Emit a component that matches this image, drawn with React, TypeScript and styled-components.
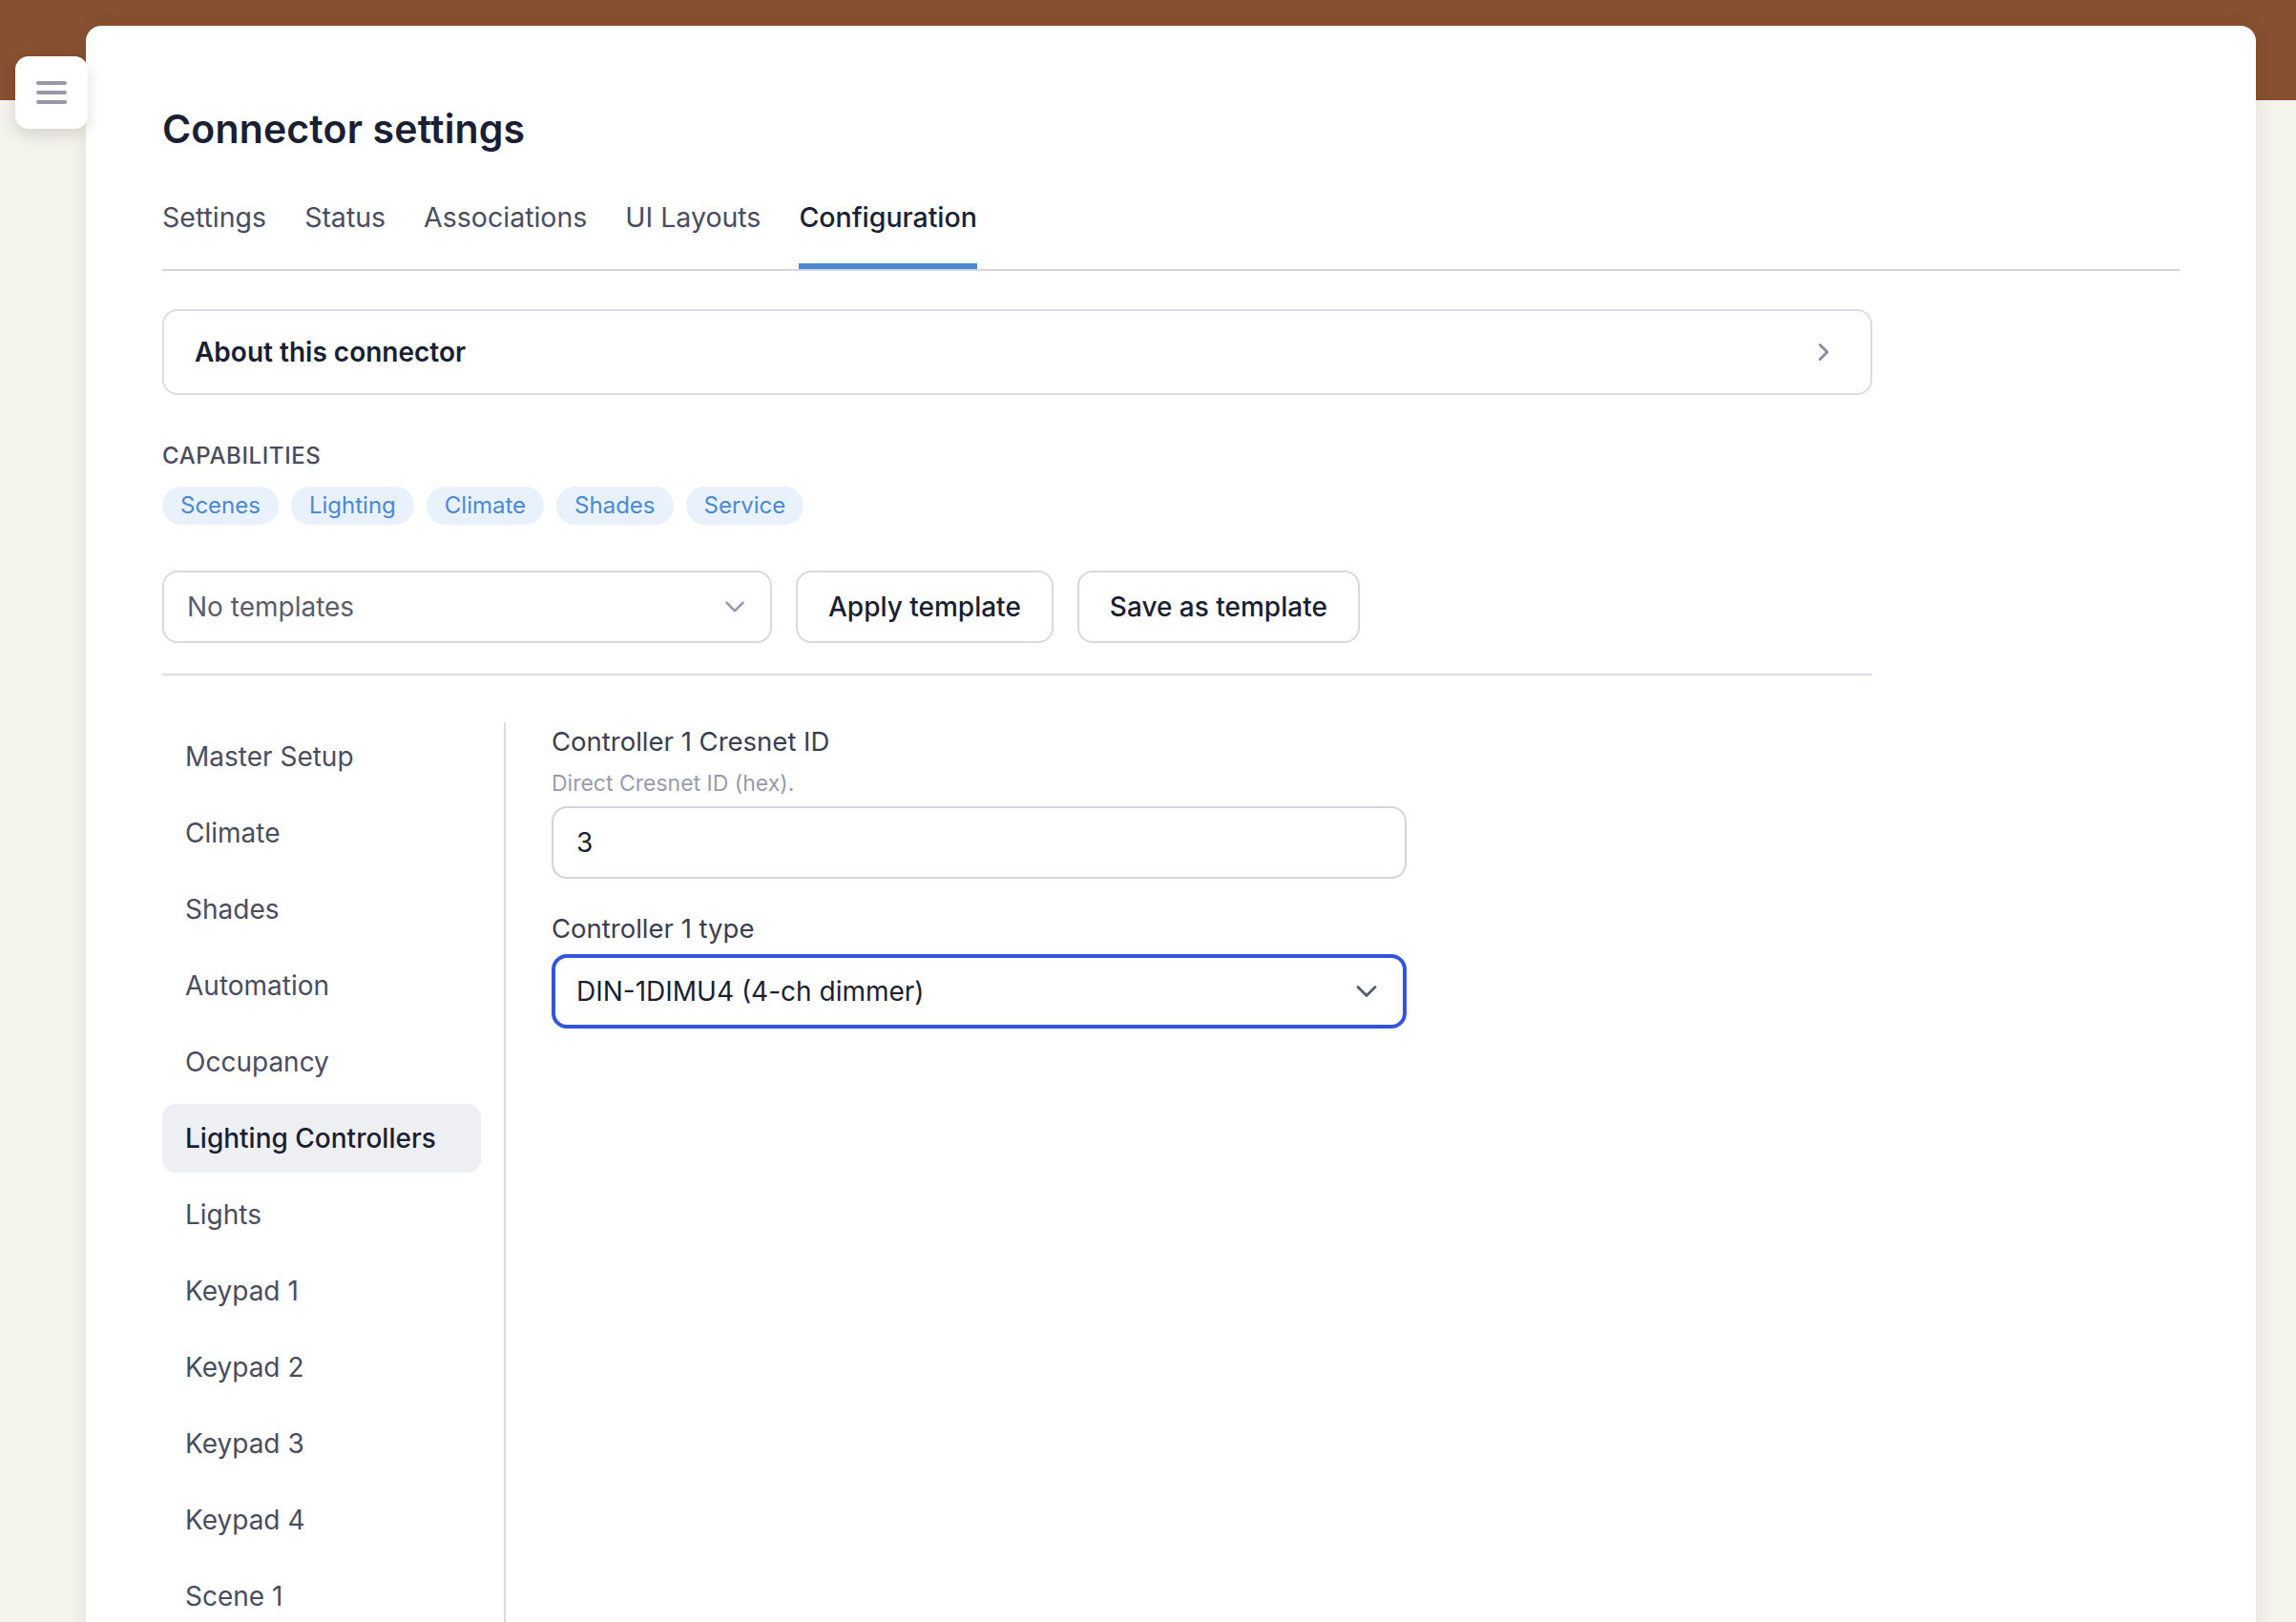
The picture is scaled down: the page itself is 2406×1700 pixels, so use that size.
import React from "react";
import styled, { createGlobalStyle } from "styled-components";
import { ChevronDown, ChevronRight } from "lucide-react";

const GlobalStyle = createGlobalStyle`
  html, body {
    margin: 0;
    padding: 0;
    height: 100%;
    overflow: hidden;
  }
  body {
    font-family: Inter, "Noto Sans", "Liberation Sans", sans-serif;
    background: #f4f3ec;
    color: #1a1f33;
  }
  * { box-sizing: border-box; }
`;

const Page = styled.div`
  position: relative;
  height: 1700px;
  overflow: hidden;
  padding: 27px 42px 0 90px;
  background: linear-gradient(#875030 0, #875030 105px, #f4f3ec 105px);
`;

const MenuButton = styled.button`
  position: absolute;
  left: 16px;
  top: 59px;
  width: 76px;
  height: 76px;
  border: none;
  border-radius: 14px;
  background: #ffffff;
  box-shadow: 0 6px 16px rgba(40, 30, 20, 0.14);
  display: flex;
  flex-direction: column;
  align-items: center;
  justify-content: center;
  gap: 6px;
  padding: 0;
  z-index: 2;
`;

const MenuLine = styled.span`
  display: block;
  width: 32px;
  height: 4px;
  border-radius: 2px;
  background: #9898a8;
`;

const Card = styled.main`
  background: #ffffff;
  border-radius: 16px 16px 0 0;
  min-height: 1800px;
  padding: 80px 80px 0 80px;
  box-shadow: 0 2px 18px rgba(60, 50, 30, 0.1);
`;

const Title = styled.h1`
  margin: 0;
  font-size: 41px;
  line-height: 56px;
  font-weight: 600;
  color: #1a1f33;
  letter-spacing: 0.15px;
`;

const TabList = styled.nav`
  margin-top: 45px;
  display: flex;
  gap: 40px;
  border-bottom: 2px solid #d6d6e0;
`;

const Tab = styled.div<{ $active?: boolean }>`
  font-size: 28.5px;
  line-height: 40px;
  padding-bottom: 28px;
  border-bottom: 6px solid ${(p) => (p.$active ? "#4a88d4" : "transparent")};
  color: ${(p) => (p.$active ? "#1a1f33" : "#4a4d5e")};
  font-weight: ${(p) => (p.$active ? 500 : 400)};
`;

const Section = styled.div`
  max-width: 1792px;
`;

const AboutCard = styled.div`
  margin-top: 40px;
  border: 2px solid #dcdce4;
  border-radius: 16px;
  padding: 23px 32px 23px 32px;
  display: flex;
  align-items: center;
  justify-content: space-between;
  font-size: 28px;
  line-height: 40px;
  font-weight: 600;
  color: #1a1f33;
`;

const ChevronBox = styled.span`
  display: flex;
  color: #8a8ca0;
  margin-right: 2px;
`;

const CapLabel = styled.div`
  margin-top: 48px;
  font-size: 24px;
  line-height: 32px;
  font-weight: 500;
  letter-spacing: 0.6px;
  text-transform: uppercase;
  color: #4a4d5e;
`;

const ChipRow = styled.div`
  margin-top: 16px;
  display: flex;
  gap: 13px;
`;

const Chip = styled.span`
  display: inline-block;
  padding: 4px 19px;
  border-radius: 999px;
  background: #e8f1fc;
  color: #4a8ad4;
  font-size: 24px;
  line-height: 32px;
`;

const TemplateRow = styled.div`
  margin-top: 48px;
  display: flex;
  gap: 25px;
  padding-bottom: 32px;
  border-bottom: 2px solid #dcdce4;
`;

const SelectBox = styled.div<{ $focused?: boolean; $width?: number }>`
  width: ${(p) => (p.$width ? `${p.$width}px` : "100%")};
  height: ${(p) => (p.$focused ? 78 : 76)}px;
  border: ${(p) => (p.$focused ? "4px solid #3355dc" : "2px solid #d8d8e0")};
  border-radius: 16px;
  display: flex;
  align-items: center;
  justify-content: space-between;
  padding: 0 20px 0 ${(p) => (p.$focused ? 22 : 24)}px;
  font-size: 28px;
  line-height: 40px;
  color: ${(p) => (p.$focused ? "#1a1f33" : "#5a5c6c")};
`;

const SelectChevron = styled.span<{ $dark?: boolean }>`
  display: flex;
  color: ${(p) => (p.$dark ? "#5a6070" : "#9a9cab")};
`;

const OutlineButton = styled.button`
  height: 76px;
  padding: 0 32px;
  border: 2px solid #d8d8e0;
  border-radius: 16px;
  background: #ffffff;
  font-family: inherit;
  font-size: 28px;
  font-weight: 500;
  color: #1a1f33;
`;

const Split = styled.div`
  margin-top: 49px;
  display: flex;
  align-items: stretch;
`;

const SideNav = styled.aside`
  width: 360px;
  padding-right: 24px;
  border-right: 2px solid #dcdce4;
  display: flex;
  flex-direction: column;
  gap: 8px;
  min-height: 1100px;
`;

const NavItem = styled.div<{ $active?: boolean }>`
  height: 72px;
  padding: 0 24px;
  border-radius: 14px;
  display: flex;
  align-items: center;
  font-size: 28px;
  background: ${(p) => (p.$active ? "#eeeff3" : "transparent")};
  color: ${(p) => (p.$active ? "#1a1f33" : "#4a4d5e")};
  font-weight: ${(p) => (p.$active ? 500 : 400)};
`;

const Content = styled.section`
  padding-left: 48px;
  width: 944px;
  display: flex;
  flex-direction: column;
  gap: 32px;
`;

const Field = styled.div`
  display: flex;
  flex-direction: column;
`;

const FieldLabel = styled.label`
  font-size: 27.5px;
  line-height: 40px;
  font-weight: 400;
  color: #3a3e50;
`;

const Help = styled.div`
  margin-top: 8px;
  font-size: 23px;
  line-height: 32px;
  color: #9a9cab;
`;

const TextInput = styled.div`
  margin-top: 8px;
  height: 76px;
  border: 2px solid #d4d4de;
  border-radius: 16px;
  padding: 0 24px;
  display: flex;
  align-items: center;
  font-size: 28px;
  color: #1a1f33;
`;

const SelectWrap = styled.div`
  margin-top: 7px;
`;

const navItems = [
  "Master Setup",
  "Climate",
  "Shades",
  "Automation",
  "Occupancy",
  "Lighting Controllers",
  "Lights",
  "Keypad 1",
  "Keypad 2",
  "Keypad 3",
  "Keypad 4",
  "Scene 1",
];

const tabs = ["Settings", "Status", "Associations", "UI Layouts", "Configuration"];
const chips = ["Scenes", "Lighting", "Climate", "Shades", "Service"];

export default function App() {
  return (
    <>
      <GlobalStyle />
      <Page>
        <MenuButton aria-label="Menu">
          <MenuLine />
          <MenuLine />
          <MenuLine />
        </MenuButton>
        <Card>
          <Title>Connector settings</Title>
          <TabList>
            {tabs.map((t) => (
              <Tab key={t} $active={t === "Configuration"}>
                {t}
              </Tab>
            ))}
          </TabList>
          <Section>
            <AboutCard>
              <span>About this connector</span>
              <ChevronBox>
                <ChevronRight size={30} strokeWidth={2.4} />
              </ChevronBox>
            </AboutCard>
            <CapLabel>Capabilities</CapLabel>
            <ChipRow>
              {chips.map((c) => (
                <Chip key={c}>{c}</Chip>
              ))}
            </ChipRow>
            <TemplateRow>
              <SelectBox $width={639}>
                <span>No templates</span>
                <SelectChevron>
                  <ChevronDown size={34} strokeWidth={1.8} />
                </SelectChevron>
              </SelectBox>
              <OutlineButton>Apply template</OutlineButton>
              <OutlineButton>Save as template</OutlineButton>
            </TemplateRow>
          </Section>
          <Split>
            <SideNav>
              {navItems.map((n) => (
                <NavItem key={n} $active={n === "Lighting Controllers"}>
                  {n}
                </NavItem>
              ))}
            </SideNav>
            <Content>
              <Field>
                <FieldLabel>Controller 1 Cresnet ID</FieldLabel>
                <Help>Direct Cresnet ID (hex).</Help>
                <TextInput>3</TextInput>
              </Field>
              <Field>
                <FieldLabel>Controller 1 type</FieldLabel>
                <SelectWrap>
                  <SelectBox $focused>
                    <span>DIN-1DIMU4 (4-ch dimmer)</span>
                    <SelectChevron $dark>
                      <ChevronDown size={36} strokeWidth={2} />
                    </SelectChevron>
                  </SelectBox>
                </SelectWrap>
              </Field>
            </Content>
          </Split>
        </Card>
      </Page>
    </>
  );
}
